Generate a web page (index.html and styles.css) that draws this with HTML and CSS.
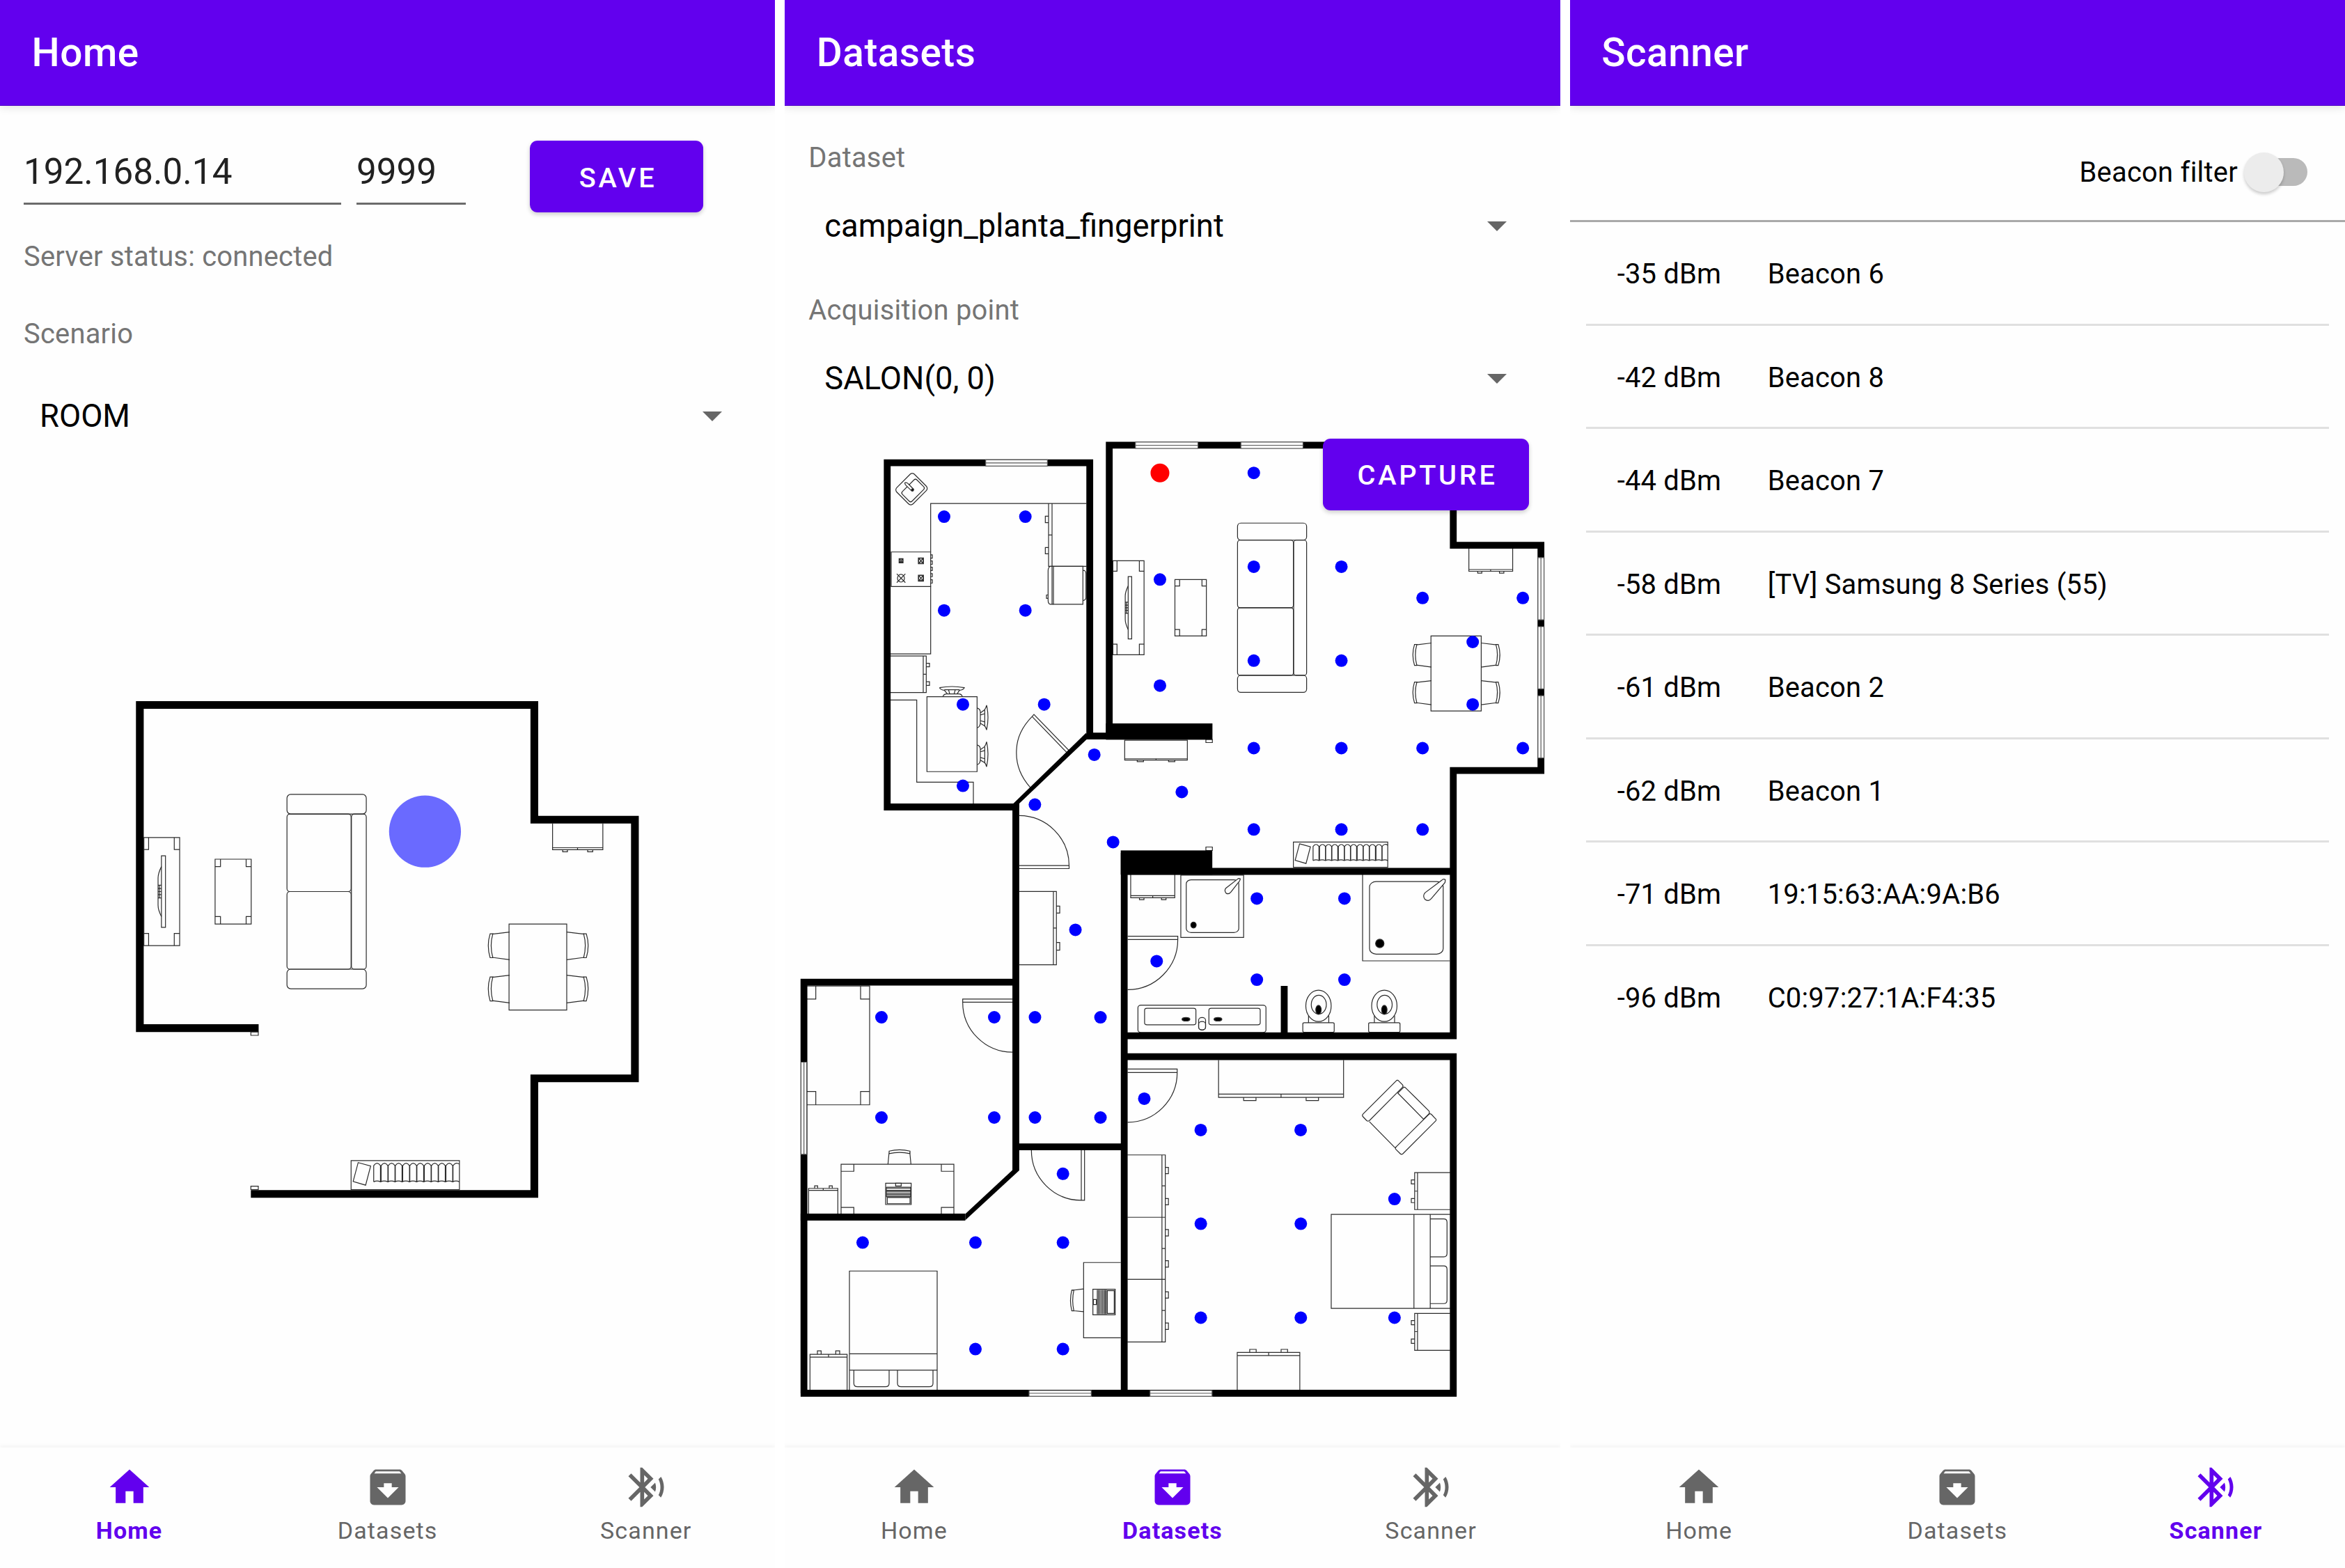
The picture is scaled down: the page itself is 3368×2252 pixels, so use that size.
FILE: index.html
```html
<!DOCTYPE html>
<html lang="en">
<head>
<meta charset="utf-8">
<title>Indoor positioning</title>
<link rel="stylesheet" href="styles.css">
</head>
<body>
<svg class="defs" width="0" height="0" aria-hidden="true">
  <symbol id="ic-home" viewBox="0 0 24 24"><path d="M10 20v-6h4v6h5v-8h3L12 3 2 12h3v8z"/></symbol>
  <symbol id="ic-archive" viewBox="0 0 24 24"><path d="M20.54 5.23l-1.39-1.68C18.88 3.21 18.47 3 18 3H6c-.47 0-.88.21-1.16.55L3.46 5.23C3.17 5.57 3 6.02 3 6.5V19c0 1.1.9 2 2 2h14c1.1 0 2-.9 2-2V6.5c0-.48-.17-.93-.46-1.27zM12 17.5L6.5 12H10v-2h4v2h3.5L12 17.5zM5.12 5l.81-1h12l.94 1H5.12z"/></symbol>
  <symbol id="ic-scan" viewBox="0 0 24 24"><path d="M14.24 12.01l2.32 2.32c.28-.72.44-1.51.44-2.33 0-.82-.16-1.59-.43-2.31l-2.33 2.32zm5.29-5.3l-1.26 1.26c.63 1.21.98 2.57.98 4.02s-.36 2.82-.98 4.02l1.2 1.2c.97-1.54 1.54-3.36 1.54-5.31-.01-1.89-.55-3.67-1.48-5.19zm-3.82 1L10 2H9v7.59L4.41 5 3 6.41 8.59 12 3 17.59 4.41 19 9 14.41V22h1l5.71-5.71-4.3-4.29 4.3-4.29zM11 5.83l1.88 1.88L11 9.59V5.83zm1.88 10.46L11 18.17v-3.76l1.88 1.88z"/></symbol>

  <!-- Living room furniture, shared by both plans -->
  <g id="salon" class="furniture">
    <rect x="55" y="460" width="106" height="320"/>
    <path d="M55 495.5H69V460M145 460V495.5H161M55 744H69V780M145 780V744H161"/>
    <rect x="107" y="514" width="12" height="212"/>
    <path d="M107 546Q97 566 97 580V660Q97 674 107 694M97 601H107M97 611H107M97 620H107M97 629H107M97 639H107M101 601V639"/>
    <rect x="266" y="524" width="107" height="192"/>
    <path d="M266 546H282V524M358 524V546H373M266 694H282V716M358 716V694H373"/>
    <rect x="479" y="332" width="235" height="58" rx="11"/>
    <rect x="479" y="390" width="190" height="230" rx="9"/>
    <rect x="479" y="620" width="190" height="230" rx="9"/>
    <rect x="670" y="390" width="44" height="460" rx="9"/>
    <rect x="479" y="850" width="235" height="58" rx="11"/>
    <path d="M1266 418V496H1415V418M1266 490H1415M1340 490V496M1296 496V502H1310V496M1370 496V502H1385V496"/>
    <rect x="1137" y="716" width="171" height="255"/>
    <path d="M1308 740L1360 746M1308 822L1360 815M1358 745H1366Q1377 780 1366 816H1358Q1368 780 1358 745z"/>
    <path transform="translate(2447 0) scale(-1 1)" d="M1308 740L1360 746M1308 822L1360 815M1358 745H1366Q1377 780 1366 816H1358Q1368 780 1358 745z"/>
    <path transform="translate(0 128)" d="M1308 740L1360 746M1308 822L1360 815M1358 745H1366Q1377 780 1366 816H1358Q1368 780 1358 745z"/>
    <path transform="translate(2447 128) scale(-1 1)" d="M1308 740L1360 746M1308 822L1360 815M1358 745H1366Q1377 780 1366 816H1358Q1368 780 1358 745z"/>
    <rect x="669" y="1417" width="321" height="86"/>
    <path d="M690 1423L727 1433L712 1490L675 1479z"/>
    <path d="M736 1480V1432Q746 1418 756 1432V1480M758 1480V1432Q768 1418 778 1432V1480M779 1480V1432Q789 1418 799 1432V1480M800 1480V1432Q810 1418 820 1432V1480M822 1480V1432Q832 1418 842 1432V1480M843 1480V1432Q853 1418 863 1432V1480M864 1480V1432Q874 1418 884 1432V1480M886 1480V1432Q896 1418 906 1432V1480M907 1480V1432Q917 1418 927 1432V1480M928 1480V1432Q938 1418 948 1432V1480M950 1480V1432Q960 1418 970 1432V1480M971 1480V1432Q980 1420 990 1428"/>
    <path d="M736 1480q10-5 20 0q11-5 22 0q10-5 21 0q10-5 21 0q11-5 22 0q10-5 21 0q10-5 21 0q11-5 22 0q10-5 21 0q10-5 21 0q11-5 22 0q10-5 20 0"/>
  </g>
</svg>

<main class="screens">
  <section class="screen">
    <header class="appbar">Home</header>
    <div class="content">
      <div class="server">
        <div class="field field-host">192.168.0.14</div>
        <div class="field field-port">9999</div>
        <button class="btn btn-save">SAVE</button>
      </div>
      <div class="label status">Server status: connected</div>
      <div class="label scenario">Scenario</div>
      <div class="spinner spinner-room"><span>ROOM</span><i class="caret"></i></div>
      <svg class="plan plan-home" viewBox="0 0 1568 1568">
        <path class="wall-home" d="M395 1024.5H43V67H1212V407H1510V1173.5H1212V1516H372"/>
        <g class="furniture"><rect x="372" y="1036" width="22" height="10"/><rect x="372" y="1493" width="22" height="10"/></g>
        <use href="#salon"/>
        <circle class="position" cx="888" cy="442" r="106.5"/>
      </svg>
    </div>
    <nav class="nav">
      <a class="tab active"><svg><use href="#ic-home"/></svg><span>Home</span></a>
      <a class="tab"><svg><use href="#ic-archive"/></svg><span>Datasets</span></a>
      <a class="tab"><svg><use href="#ic-scan"/></svg><span>Scanner</span></a>
    </nav>
  </section>

  <section class="screen">
    <header class="appbar">Datasets</header>
    <div class="content">
      <div class="label dataset">Dataset</div>
      <div class="spinner"><span>campaign_planta_fingerprint</span><i class="caret"></i></div>
      <div class="label point">Acquisition point</div>
      <div class="spinner"><span>SALON(0, 0)</span><i class="caret"></i></div>
      <div class="map">
        <svg class="plan" viewBox="1127.33 620 1113.33 1400">
          <g class="furniture">
            <rect x="1732.3" y="1062" width="9.3" height="4.5"/>
            <rect x="1732.3" y="1216.5" width="9.3" height="5"/>
          </g>
          <use href="#salon" transform="translate(1575.5 611.1) scale(.4222)"/>

          <!-- Kitchen sink -->
          <g class="furniture">
            <rect x="-18" y="-16.5" width="36" height="33" rx="4.5" transform="translate(1309.5 702.5) rotate(-45)"/>
            <rect x="-14.7" y="-9.8" width="29.4" height="19.6" rx="3" transform="translate(1311.7 704.5) rotate(-45)"/>
          </g>

          <!-- Kitchen and hall cabinet -->
          <g class="furniture" transform="translate(1250 620) scale(.33333 .3699)">
            <path d="M261 467V279H932M769 279V523H932M784 279V523M769 401H784M769 328H755V353H769M769 450H755V474H769"/>
            <path class="paper" d="M150 198Q158 196 164 202L188 224Q188 232 179 230L154 208Q148 202 150 198z"/>
            <circle class="solid" cx="182" cy="226" r="4"/>
            <rect x="91" y="467" width="170" height="134"/>
            <path d="M125 493H142V509H125zL142 509M142 493L125 509M208 490H230V513H208zL230 513M230 490L208 513M208 557H230V580H208zL230 580M230 557L208 580"/>
            <circle cx="133.5" cy="501" r="7"/><circle cx="219" cy="501" r="10"/><circle cx="219" cy="568" r="10"/><circle cx="133" cy="569" r="15"/>
            <path d="M115 552L152 586M152 552L115 586M261 478H268V491H261M261 502H268V515H261M261 526H268V539H261M261 551H268V563H261M261 575H268V588H261"/>
            <path d="M88 863H261V601M88 871H242V1013H88M229 871V1013M229 942H242M242 899H256V913H242M242 971H256V985H242"/>
            <rect x="790" y="523" width="127" height="147"/>
            <path d="M790 523H776Q767 527 767 540V654Q767 668 776 670H790M784 523V670M917 539H924Q930 543 930 550V645Q930 654 917 656M767 634H760V647H767"/>
            <path d="M88 1042H201V1361H445V1444"/>
            <rect x="245" y="1029" width="216" height="291"/>
            <path d="M313 1029Q318 1018 330 1018H382Q394 1018 398 1029M299 994Q353 985 406 994Q402 1002 385 1004L375 1018M299 994Q304 1002 320 1004L333 1018M320 1002H385M338 1002L343 1018M367 1002L362 1018"/>
            <path d="M461 1073Q475 1076 475 1090V1130Q475 1146 461 1150M502 1062Q514 1110 502 1158Q498 1145 493 1142L475 1132M502 1062Q498 1075 493 1080L475 1092M494 1080V1142M475 1100L494 1095M475 1122L494 1127"/>
            <path d="M461 1216Q475 1219 475 1233V1273Q475 1289 461 1293M502 1204Q514 1252 502 1301Q498 1288 493 1285L475 1275M502 1204Q498 1218 493 1223L475 1235M494 1223V1285M475 1243L494 1238M475 1265L494 1270"/>
            <path d="M690 1381Q625 1315 631 1234Q634 1165 698 1106L706 1098L856 1237L848 1246L698 1106"/>
            <path d="M1097 1198H1367V1275H1097zM1097 1270H1367M1232 1270V1275M1151 1275V1281H1178V1275M1286 1275V1281H1313V1275"/>
          </g>

          <!-- Corridor, bathroom and top of the main bedroom -->
          <g class="furniture" transform="translate(1430 1120) scale(.43367 .35714)">
            <path d="M79 144A166 201 0 0 1 244 345V357H79M79 345H244"/>
            <path d="M79 449H202V744H79M192 449V744M192 596H202M202 508H213V536H202M202 654H213V685H202"/>
            <path d="M448 381V474H594V381M448 466H594M521 466V474M477 474V482H492V474M550 474V482H565V474"/>
            <rect x="614" y="383" width="208" height="251"/><rect x="632" y="402" width="174" height="212" rx="16"/>
            <path class="paper" d="M811 398Q806 394 801 400L763 436Q757 446 764 456Q773 462 780 451L809 406z"/>
            <ellipse class="solid" cx="656" cy="584" rx="9" ry="12"/>
            <path d="M1216 381V728H1505"/><rect x="1239" y="409" width="244" height="292" rx="22"/>
            <path class="paper" d="M1490 402Q1484 396 1478 404L1423 454Q1414 466 1422 480Q1434 492 1444 477L1489 413z"/>
            <ellipse class="solid" cx="1273" cy="658" rx="14" ry="17"/>
            <path d="M438 629H604V642H438M604 642A166 202 0 0 1 438 844"/>
            <rect x="472" y="906" width="424" height="110" rx="10"/><rect x="494" y="919" width="170" height="66" rx="8"/><rect x="707" y="919" width="170" height="66" rx="8"/>
            <ellipse class="solid" cx="631" cy="963" rx="13" ry="7"/><ellipse class="solid" cx="737" cy="963" rx="13" ry="7"/>
            <rect x="673" y="956" width="23" height="50" rx="11"/><rect x="673" y="972" width="23" height="34" rx="11"/>
            <g id="toilet"><ellipse cx="1070" cy="909" rx="42" ry="63"/><ellipse cx="1071" cy="904" rx="25" ry="38"/><ellipse class="solid" cx="1070" cy="925" rx="9" ry="18"/><path d="M1037 948V977M1104 948V977"/><rect x="1018" y="977" width="104" height="38" rx="5"/></g>
            <use href="#toilet" x="218"/>
            <path d="M438 1163H602V1177H438M602 1177A164 200 0 0 1 438 1377"/>
            <path d="M739 1127V1277H1153V1127M739 1264H1153M946 1264V1277M822 1277V1290H863V1277M1029 1277V1290H1070V1277"/>
          </g>

          <!-- Study and small bedroom -->
          <g class="furniture" transform="translate(1130 1390) scale(.33333 .40816)">
            <path d="M88 64H358V482H88M126 64V110H88M319 64V110H358M88 435H126V482M319 482V435H358"/>
            <path d="M974 110H759V121H974M759 121A215 176 0 0 0 974 297"/>
            <rect x="235" y="691" width="486" height="176"/>
            <path d="M235 716H290V691M667 691V716H721M235 843H290V867M667 867V843H721"/>
            <path d="M437 691L442 648M536 691L531 648M442 654V645Q487 636 532 645V654Q487 645 442 654z"/>
            <path d="M95 867V776H221V867M95 783H221M158 776V783M121 776V767H134V776M184 776V767H197V776"/>
            <rect x="427" y="758" width="110" height="75"/><rect x="434" y="808" width="98" height="22"/>
            <path d="M470 758H494V768H470zM430 772H535M430 776H535M430 783H535M430 787H535M430 793H535M430 798H535M430 803H535M430 806H535M430 772V806M535 772V806"/>
            <rect x="271" y="1067" width="378" height="419"/>
            <path d="M271 1358H649M271 1416H649M290 1416V1462Q290 1474 306 1474H426Q442 1474 442 1462V1416M478 1416V1462Q478 1474 494 1474H615Q631 1474 631 1462V1416"/>
            <path d="M101 1486V1360H261V1486M101 1370H261M181 1360V1370M133 1360V1348H149V1360M212 1360V1348H229V1360"/>
            <path d="M1055 642A215 176 0 0 0 1270 818H1284V642M1270 642V818"/>
            <path d="M1440 1037H1280V1302H1440M1280 1130L1230 1135M1280 1210L1230 1206M1238 1134H1229Q1218 1170 1229 1207H1238Q1228 1170 1238 1134z"/>
            <rect x="1320" y="1131" width="96" height="90"/><rect x="1382" y="1136" width="30" height="80"/>
            <path d="M1322 1167H1335V1185H1322zM1339 1133V1219M1344 1133V1219M1350 1133V1219M1356 1133V1219M1362 1133V1219M1368 1133V1219M1373 1133V1219M1378 1133V1219"/>
          </g>

          <!-- Main bedroom -->
          <g class="furniture" transform="translate(1580 1490) scale(.34435)">
            <path d="M115 490H273V1270H115M259 490V1270M115 750H273M115 1009H273M259 619H273M259 880H273M259 1139H273"/>
            <path d="M273 542H286V568H273M273 672H286V698H273M273 801H286V828H273M273 931H286V958H273M273 1061H286V1087H273M273 1191H286V1218H273"/>
            <path d="M1236 181Q1241 176 1246 181L1262 197Q1267 203 1262 208L1124 347Q1118 351 1113 347L1098 331Q1092 325 1098 319z"/>
            <path d="M1398 337L1383 321Q1377 316 1372 321L1235 457Q1230 462 1235 467L1253 485Q1258 490 1264 485L1400 349Q1406 343 1398 337z"/>
            <path d="M1243 232L1265 210Q1270 205 1275 210L1372 306Q1377 312 1372 319L1350 341zM1124 351L1228 457Q1232 461 1236 457"/>
            <path d="M1461 564H1313V718H1461M1325 564V718M1313 641H1325M1313 594H1299V611H1313M1313 672H1299V689H1313"/>
            <path d="M1461 1151H1313V1305H1461M1325 1151V1305M1313 1227H1325M1313 1181H1299V1198H1313M1313 1258H1299V1276H1313"/>
            <path d="M1461 738H965V1130H1461M1310 738V1130M1378 738V1130M1378 757H1434Q1448 757 1448 771V901Q1448 915 1434 915H1378M1378 953H1434Q1448 953 1448 967V1096Q1448 1110 1434 1110H1378"/>
            <path d="M573 1470V1314H834V1470M573 1327H834M704 1314V1327M625 1314V1301H652V1314M756 1314V1301H783V1314"/>
          </g>

          <g class="walls">
            <path d="M1459 1159H1274.6V664.7H1565.5V1057.2H1594"/>
            <path d="M1593.5 1057V639.4H2087.6V783.1H2213.5V1106.7H2087.6V1487.7H1615"/>
            <path d="M1615 1251.5H2087M1615 1225V2001M1459.3 1154V1681M1459 1647.1H1615M1844.8 1416V1484"/>
            <path d="M1155 2001V1410.6H1459M1150 1748H1386.7M1150.2 2001H2087.6V1517.7H1615"/>
          </g>
          <g class="wall-fill">
            <rect x="1588.7" y="1039" width="153" height="23.4"/>
            <rect x="1610" y="1221.4" width="131.5" height="34.8"/>
            <path d="M1560 1052.8L1566 1062H1561L1464 1154.2V1160L1455.5 1154.2z"/>
            <path d="M1454.7 1680.2L1464.2 1681L1386.7 1752.6V1743.4z"/>
          </g>
          <g class="window">
            <path d="M1416 660.3H1504.7V669.3H1416zM1416 664.8H1504.7"/>
            <path d="M1631.1 635H1720.9V644H1631.1zM1631.1 639.5H1720.9"/>
            <path d="M1782.5 635H1871.8V644H1782.5zM1782.5 639.5H1871.8"/>
            <path d="M2209.2 800.8V890.2H2217.9V800.8zM2213.5 800.8V890.2"/>
            <path d="M2209.2 900V989.4H2217.9V900zM2213.5 900V989.4"/>
            <path d="M2209.2 999.2V1088.6H2217.9V999.2zM2213.5 999.2V1088.6"/>
            <path d="M1150.8 1525.5V1657.8H1159V1525.5zM1155 1525.5V1657.8"/>
            <path d="M1478.3 1997H1567.7V2005.3H1478.3zM1478.3 2001H1567.7"/>
            <path d="M1652 1997H1741.2V2005.3H1652zM1652 2001H1741.2"/>
          </g>

          <g class="points">
            <circle cx="1356.3" cy="742.1" r="9"/><circle cx="1473" cy="742.1" r="9"/>
            <circle cx="1356.3" cy="876.7" r="9"/><circle cx="1473" cy="876.7" r="9"/>
            <circle cx="1383.3" cy="1011.7" r="9"/><circle cx="1500" cy="1011.7" r="9"/>
            <circle cx="1383.3" cy="1128.6" r="9"/><circle cx="1486.7" cy="1155.6" r="9"/>
            <circle cx="1572" cy="1083.9" r="9"/><circle cx="1697.7" cy="1137.5" r="9"/>
            <circle class="selected" cx="1666.3" cy="679.2" r="13.5"/>
            <circle cx="1666.3" cy="832.3" r="9"/><circle cx="1666.3" cy="984.7" r="9"/>
            <circle cx="1801.1" cy="679.2" r="9"/><circle cx="1801.1" cy="813.9" r="9"/>
            <circle cx="1926.9" cy="813.9" r="9"/><circle cx="2043.5" cy="858.8" r="9"/>
            <circle cx="2187.5" cy="858.8" r="9"/><circle cx="2115.5" cy="922" r="9"/>
            <circle cx="1801.1" cy="948.8" r="9"/><circle cx="1926.9" cy="948.8" r="9"/>
            <circle cx="2115.5" cy="1011.7" r="9"/>
            <circle cx="1801.1" cy="1074.5" r="9"/><circle cx="1926.9" cy="1074.5" r="9"/>
            <circle cx="2043.5" cy="1074.5" r="9"/><circle cx="2187.5" cy="1074.5" r="9"/>
            <circle cx="1801.1" cy="1191.3" r="9"/><circle cx="1926.9" cy="1191.3" r="9"/>
            <circle cx="2043.5" cy="1191.3" r="9"/><circle cx="1599" cy="1209.4" r="9"/>
            <circle cx="1805.5" cy="1290.4" r="9"/><circle cx="1931.3" cy="1290.4" r="9"/>
            <circle cx="1661.6" cy="1380.4" r="9"/><circle cx="1805.5" cy="1407.1" r="9"/>
            <circle cx="1931.3" cy="1407.1" r="9"/><circle cx="1544.9" cy="1335.4" r="9"/>
            <circle cx="1486.8" cy="1461.1" r="9"/><circle cx="1580.9" cy="1461.1" r="9"/>
            <circle cx="1486.8" cy="1605" r="9"/><circle cx="1580.9" cy="1605" r="9"/>
            <circle cx="1643.8" cy="1577.9" r="9"/><circle cx="1724.9" cy="1622.9" r="9"/>
            <circle cx="1868.4" cy="1622.9" r="9"/>
            <circle cx="1266.3" cy="1461" r="9"/><circle cx="1428.3" cy="1461" r="9"/>
            <circle cx="1266.3" cy="1605" r="9"/><circle cx="1428.3" cy="1605" r="9"/>
            <circle cx="1527" cy="1685.8" r="9"/><circle cx="1239.3" cy="1784.6" r="9"/>
            <circle cx="1401.3" cy="1784.6" r="9"/><circle cx="1527" cy="1784.6" r="9"/>
            <circle cx="1401.3" cy="1937.6" r="9"/><circle cx="1527" cy="1937.6" r="9"/>
            <circle cx="1725" cy="1757.6" r="9"/><circle cx="1868.6" cy="1757.6" r="9"/>
            <circle cx="2003.2" cy="1722.1" r="9"/><circle cx="1725" cy="1892.5" r="9"/>
            <circle cx="1868.6" cy="1892.5" r="9"/><circle cx="2003.2" cy="1892.5" r="9"/>
          </g>
        </svg>
        <button class="btn btn-capture">CAPTURE</button>
      </div>
    </div>
    <nav class="nav">
      <a class="tab"><svg><use href="#ic-home"/></svg><span>Home</span></a>
      <a class="tab active"><svg><use href="#ic-archive"/></svg><span>Datasets</span></a>
      <a class="tab"><svg><use href="#ic-scan"/></svg><span>Scanner</span></a>
    </nav>
  </section>

  <section class="screen">
    <header class="appbar">Scanner</header>
    <div class="content">
      <div class="filter"><span>Beacon filter</span><div class="switch"></div></div>
      <ul class="beacons">
        <li><span>-35 dBm</span><span>Beacon 6</span></li>
        <li><span>-42 dBm</span><span>Beacon 8</span></li>
        <li><span>-44 dBm</span><span>Beacon 7</span></li>
        <li><span>-58 dBm</span><span>[TV] Samsung 8 Series (55)</span></li>
        <li><span>-61 dBm</span><span>Beacon 2</span></li>
        <li><span>-62 dBm</span><span>Beacon 1</span></li>
        <li><span>-71 dBm</span><span>19:15:63:AA:9A:B6</span></li>
        <li><span>-96 dBm</span><span>C0:97:27:1A:F4:35</span></li>
      </ul>
    </div>
    <nav class="nav">
      <a class="tab"><svg><use href="#ic-home"/></svg><span>Home</span></a>
      <a class="tab"><svg><use href="#ic-archive"/></svg><span>Datasets</span></a>
      <a class="tab active"><svg><use href="#ic-scan"/></svg><span>Scanner</span></a>
    </nav>
  </section>
</main>
</body>
</html>
```

FILE: styles.css
```css
* { box-sizing: border-box; }
body { margin: 0; background: #fff; font-family: Roboto, "Liberation Sans", sans-serif; color: #000; }
.defs { position: absolute; }

.screens { display: grid; grid-template-columns: repeat(3, minmax(0, 1fr)); gap: 14px; height: 2252px; }
.screen { display: flex; flex-direction: column; background: #fefefe; overflow: hidden; }

.appbar {
  flex: none; height: 152px; padding-left: 45.5px; line-height: 151px;
  background: #6200ee; color: #fff; font-size: 56.7px; font-weight: 500; letter-spacing: .5px;
  border-bottom: 1px solid #4f00c4; box-shadow: 0 2px 12px rgba(0, 0, 0, .12);
}
.content { flex: 1; min-height: 0; }

.label { padding-left: 34px; font-size: 39.9px; line-height: 48px; letter-spacing: .22px; color: #757575; }
.status { margin-top: 40px; }
.scenario { margin-top: 63px; }
.dataset { margin-top: 51px; }
.point { margin-top: 67.5px; }

.server { display: flex; align-items: flex-start; padding: 50px 0 0 34px; }
.field { margin-top: 15px; height: 77px; border-bottom: 3px solid #6b6b6b; font-size: 51.2px; line-height: 60px; color: #212121; }
.field-host { width: 455.5px; }
.field-port { width: 157px; margin-left: 22.5px; }

.btn {
  width: 249px; height: 103px; padding: 3px 0 0 4px; border: 0; border-radius: 11px;
  background: #6200ee; color: #fff; font: 500 39.7px Roboto, sans-serif; letter-spacing: 3.7px;
  box-shadow: 0 3px 6px rgba(0, 0, 0, .2);
}
.btn-save { margin-left: 92px; }
.btn-capture { position: absolute; left: 773px; top: 10px; width: 295.5px; }

.spinner {
  display: flex; align-items: center; justify-content: space-between;
  height: 60px; margin-top: 43.5px; padding: 0 76.5px 0 57px; font-size: 45.36px; line-height: 60px;
}
.spinner-room { margin-top: 64px; }
.caret { border: 14px solid transparent; border-top-color: #666; border-bottom: 0; }

.plan { display: block; }
.plan-home { width: 760px; height: 760px; margin: 351.5px 0 0 180px; }
.map { position: relative; margin-top: 46.2px; }
.map .plan { width: 100%; height: 1400px; }

.furniture { fill: none; stroke: #2b2b2b; stroke-width: 1.2px; }
.furniture * { vector-effect: non-scaling-stroke; }
.furniture .solid { fill: #000; }
.furniture .paper { fill: #fefefe; }
.wall-home { fill: none; stroke: #000; stroke-width: 23; }
.position { fill: #6a6aff; }
.walls { fill: none; stroke: #000; stroke-width: 9.8px; }
.wall-fill { fill: #000; }
.window { fill: #fff; stroke: #555; stroke-width: 1.2px; }
.points { fill: #00f; }
.points .selected { fill: #f00; }

.filter {
  display: flex; align-items: center; justify-content: flex-end; gap: 9px;
  height: 167px; padding: 26px 54px 0 0; border-bottom: 3px solid #a9a9a9; font-size: 39.9px; letter-spacing: .25px;
}
.switch { position: relative; width: 91px; height: 57px; }
.switch::before { content: ""; position: absolute; left: 12px; right: 0; top: 8px; height: 40px; border-radius: 20px; background: #bababa; }
.switch::after { content: ""; position: absolute; left: 0; top: 0; width: 57px; height: 57px; border-radius: 50%; background: #ececec; box-shadow: 0 3px 4px rgba(0, 0, 0, .2); }

.beacons { margin: 0; padding: 0 23px; list-style: none; font-size: 39.9px; letter-spacing: .22px; }
.beacons li {
  display: grid; grid-template-columns: 216px 1fr; align-items: center;
  height: 148.5px; padding: 4px 0 0 45px; border-bottom: 3px solid #e0e0e0;
}
.beacons li:last-child { border-bottom-color: transparent; }

.nav { flex: none; display: flex; height: 173px; padding-top: 23px; box-shadow: 0 -3px 5px rgba(0, 0, 0, .04); }
.tab { flex: 1; display: flex; flex-direction: column; align-items: center; gap: 8px; font-size: 34px; line-height: 40px; letter-spacing: 1.13px; color: #666; }
.tab svg { width: 68px; height: 68px; fill: currentColor; }
.tab.active { color: #6200ee; font-weight: 700; }
```
